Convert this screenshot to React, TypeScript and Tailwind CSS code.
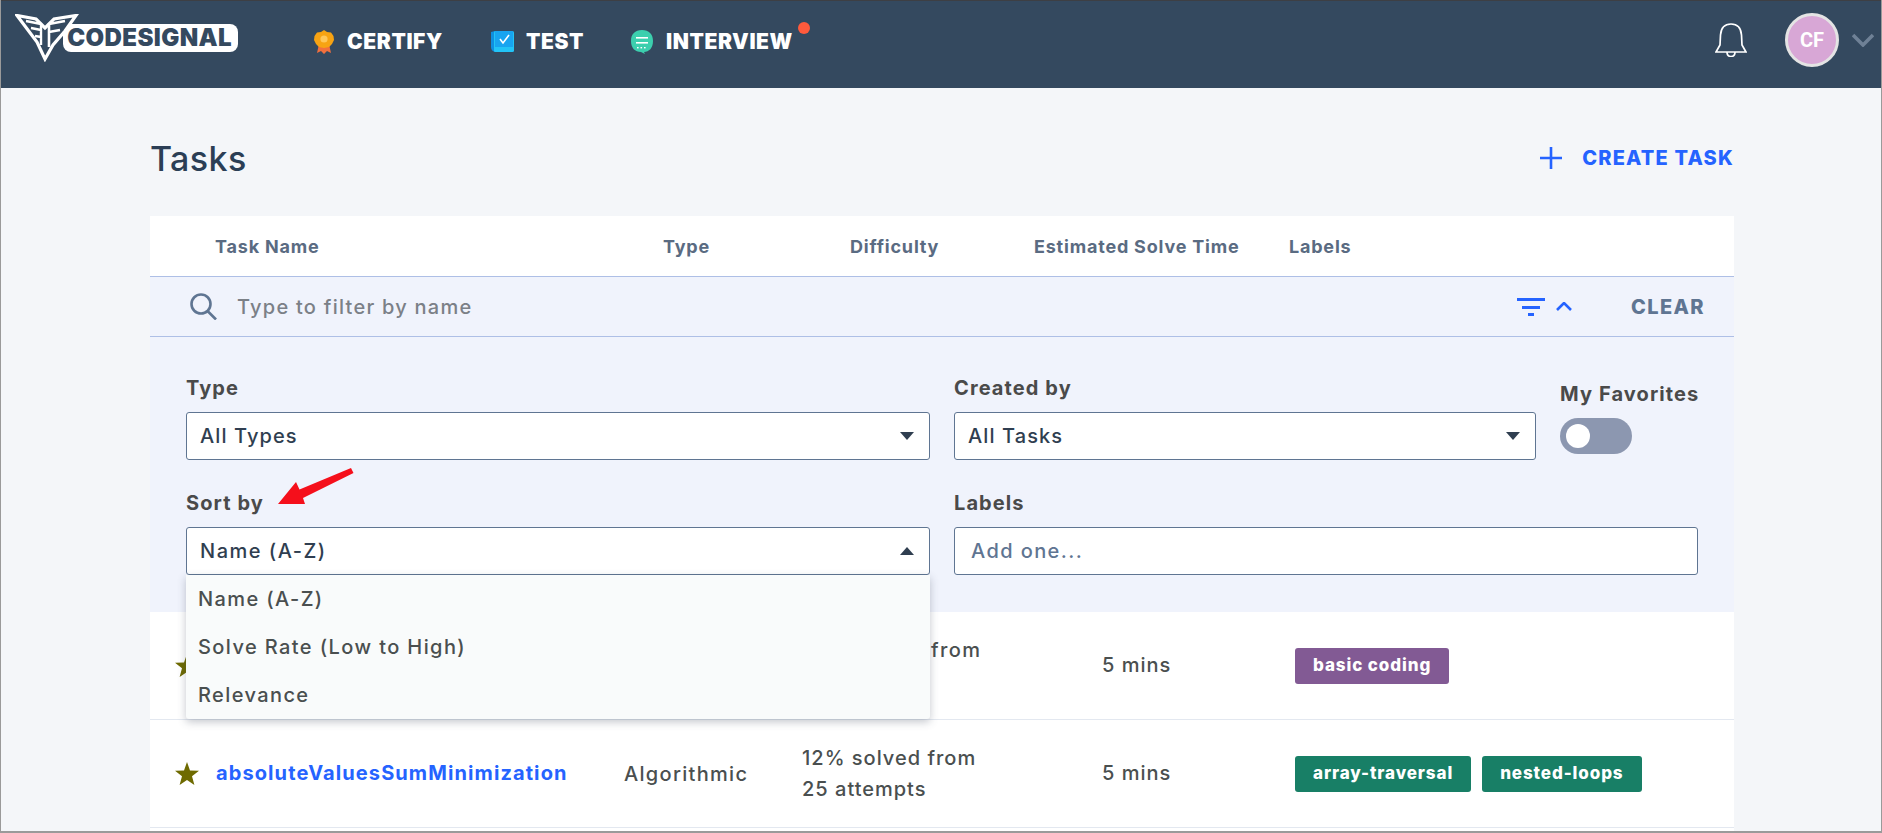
import React from "react";

const font = { fontFamily: '"Inter", "Liberation Sans", sans-serif' };

function Logo() {
  return (
    <div className="relative flex h-[48px] w-[224px] items-center">
      <div className="absolute left-[48px] top-[10px] flex h-[28px] w-[175px] items-center justify-end rounded-[8px] bg-white pr-[6px]">
        <span className="text-[24px] font-black leading-none tracking-[0.4px] text-[#34495f]">CODESIGNAL</span>
      </div>
      <svg viewBox="0 0 64 48" className="absolute left-0 top-0 h-[48px] w-[64px]">
        <path d="M2 1.5 L21 5 L30 14 L39 5 L61 1.5 L50 17 L38 31 L30 45 L22 28 Z" fill="#34495f" stroke="#fff" strokeWidth="3.2" strokeLinejoin="miter" />
        <path d="M11 7 L26 10 V31 M16 14 L26 16 M20 22 L26 23" fill="none" stroke="#fff" strokeWidth="2.4" />
        <path d="M50 7 L34 10 V33 M34 18 L45 16" fill="none" stroke="#fff" strokeWidth="2.6" />
      </svg>
    </div>
  );
}

function Medal() {
  return (
    <svg viewBox="0 0 20 24" className="h-[24px] w-[20px]">
      <path d="M5 14 L3 23 L7 21 L10 24 L13 21 L17 23 L15 14 Z" fill="#f2703d" />
      <path d="M10 0 L13 2 L17 2.5 L19.5 6 L20 10 L18 14 L15 17 L10 18 L5 17 L2 14 L0 10 L0.5 6 L3 2.5 L7 2 Z" fill="#f7a313" />
      <circle cx="10" cy="9" r="3.6" fill="#ffc75a" />
    </svg>
  );
}

function TestIcon() {
  return (
    <svg viewBox="0 0 23 21" className="h-[21px] w-[23px]">
      <path d="M0 1 L4 0 L4 17 L8 21 L4 21 Q0 20 0 16 Z" fill="#0f8fe0" />
      <rect x="3" y="0" width="20" height="21" rx="1.5" fill="#22c4f7" />
      <rect x="4" y="0" width="18" height="16" fill="#18a4f0" />
      <path d="M9 8 L12 12 L18 4" fill="none" stroke="#fff" strokeWidth="1.6" />
    </svg>
  );
}

function ChatIcon() {
  return (
    <svg viewBox="0 0 22 24" className="h-[24px] w-[22px]">
      <path d="M11 0 C18 0 22 4 22 11 C22 18 18 22 13 22 L14 24 L10 22 C4 22 0 18 0 11 C0 4 4 0 11 0 Z" fill="#3ccfae" />
      <rect x="5" y="7" width="12" height="1.6" fill="#fff" />
      <rect x="5" y="12" width="12" height="1.6" fill="#fff" />
      <rect x="6" y="17" width="1.6" height="1.4" fill="#fff" />
      <rect x="9.5" y="17" width="1.6" height="1.4" fill="#fff" />
      <rect x="13" y="17" width="1.6" height="1.4" fill="#fff" />
    </svg>
  );
}

function Caret({ up }: { up?: boolean }) {
  return (
    <svg viewBox="0 0 14 8" className="h-[8px] w-[14px]">
      <path d={up ? "M7 0 L14 8 L0 8 Z" : "M0 0 L14 0 L7 8 Z"} fill="#2f3e50" />
    </svg>
  );
}

function FieldLabel({ children }: { children: React.ReactNode }) {
  return <div className="mb-[12px] h-[24px] whitespace-nowrap text-[20px] font-bold leading-[24px] tracking-[1.1px] text-[#4a4a4a]">{children}</div>;
}

function Select({ value, up }: { value: string; up?: boolean }) {
  return (
    <div className={`flex h-[48px] items-center justify-between rounded-[3px] border border-[#5f7592] bg-white pl-[13px] pr-[15px] text-[20px] font-medium text-[#2f3e50] ${up ? "tracking-[1.5px]" : "tracking-[1.1px]"}`}>
      <span>{value}</span>
      <Caret up={up} />
    </div>
  );
}

function Tag({ children, color }: { children: React.ReactNode; color: string }) {
  return (
    <span className={`flex h-[36px] items-center rounded-[3px] px-[18px] text-[17px] font-extrabold tracking-[0.9px] text-white ${color}`}>
      {children}
    </span>
  );
}

function Star() {
  return (
    <svg viewBox="0 0 24 23" className="h-[23px] w-[24px]">
      <path d="M12 0 L15 8.4 L24 8.8 L17 14.3 L19.4 23 L12 18 L4.6 23 L7 14.3 L0 8.8 L9 8.4 Z" fill="#6e6a00" />
    </svg>
  );
}

const rowGrid = "grid grid-cols-[41px_409px_177px_300px_193px_1fr] items-center";

export default function App() {
  return (
    <div style={font} className="h-[833px] overflow-hidden border-x border-b-2 border-[#9a9a9a] bg-[#f4f6f9]">
      <header className="flex h-[88px] items-start border-t border-[#3d3f44] bg-[#34495f] pl-[14px] pr-[7px]">
        <div className="mt-[13px]"><Logo /></div>
        <nav className="ml-[75px] mt-[25px] flex items-center text-[21px] font-black tracking-[0.6px] text-white">
          <div className="flex w-[177px] items-center gap-[13px]"><Medal />CERTIFY</div>
          <div className="flex w-[140px] items-center gap-[12px]"><TestIcon />TEST</div>
          <div className="relative flex items-center gap-[13px]">
            <ChatIcon />INTERVIEW
            <span className="absolute right-[-17px] top-[-4px] h-[12px] w-[12px] rounded-full bg-[#ff5a3c]" />
          </div>
        </nav>
        <div className="ml-auto mt-[12px] flex items-center">
          <svg viewBox="0 0 32 34" className="mr-[38px] h-[34px] w-[32px]" fill="none" stroke="#fff" strokeWidth="1.7">
            <path d="M1 29 L5 22 L5.5 12 C6 5 10 1 16 1 C22 1 26 5 26.5 12 L27 22 L31 29 Z" />
            <path d="M12 29 C12 35 20 35 20 29" />
          </svg>
          <div className="mr-[13px] flex h-[54px] w-[54px] items-center justify-center rounded-full border-[3px] border-[#e4e4e4] bg-[#d8a7d6] text-[20px] font-bold text-white" style={{ fontFamily: "Roboto, sans-serif" }}>CF</div>
          <svg viewBox="0 0 22 14" className="h-[14px] w-[22px]" fill="none" stroke="#6f8196" strokeWidth="3.6">
            <path d="M1 2 L11 12 L21 2" />
          </svg>
        </div>
      </header>

      <main className="pl-[149px] pr-[147px]">
        <div className="flex h-[128px] items-center justify-between pt-[14px]">
          <h1 className="text-[34px] font-medium leading-none tracking-[0.4px] text-[#2b3e55]">Tasks</h1>
          <div className="mt-[-2px] flex items-center gap-[20px] text-[20px] font-extrabold tracking-[1.2px] text-[#2563ff]">
            <svg viewBox="0 0 22 22" className="h-[22px] w-[22px]" stroke="#2563ff" strokeWidth="2.6"><path d="M11 0 V22 M0 11 H22" /></svg>
            CREATE TASK
          </div>
        </div>

        <section className="relative min-h-[615px] bg-white">
          <div className="grid h-[60px] grid-cols-[448px_187px_184px_255px_1fr] items-center pl-[65px] text-[18px] font-bold tracking-[0.8px] text-[#5a6b82]">
            <span>Task Name</span>
            <span>Type</span>
            <span>Difficulty</span>
            <span>Estimated Solve Time</span>
            <span>Labels</span>
          </div>

          <div className="flex h-[61px] items-center border-y border-[#aebfe6] bg-[#f0f3fc] pl-[40px] pr-[29px]">
            <svg viewBox="0 0 27 27" className="h-[27px] w-[27px]" fill="none" stroke="#5f7592" strokeWidth="2.6">
              <circle cx="11" cy="11" r="9.5" />
              <path d="M17.5 18 L26 26.5" />
            </svg>
            <span className="ml-[20px] text-[20px] font-medium tracking-[1.25px] text-[#7b8087]">Type to filter by name</span>
            <div className="ml-auto flex items-center">
              <svg viewBox="0 0 28 18" className="h-[18px] w-[28px]" fill="#2563ff">
                <rect x="0" y="0" width="28" height="3" />
                <rect x="5" y="8" width="18" height="3" />
                <rect x="11" y="15" width="6" height="3" />
              </svg>
              <svg viewBox="0 0 16 9" className="ml-[11px] h-[9px] w-[16px]" fill="none" stroke="#2563ff" strokeWidth="2.6">
                <path d="M1 8 L8 1 L15 8" />
              </svg>
              <span className="ml-[59px] text-[20px] font-extrabold tracking-[1.4px] text-[#5f7592]">CLEAR</span>
            </div>
          </div>

          <div className="h-[275px] bg-[#f0f3fc] pl-[36px] pr-[36px] pt-[39px]">
            <div className="grid grid-cols-[744px_582px_1fr] gap-x-[24px]">
              <div>
                <FieldLabel>Type</FieldLabel>
                <Select value="All Types" />
              </div>
              <div>
                <FieldLabel>Created by</FieldLabel>
                <Select value="All Tasks" />
              </div>
              <div className="pt-[6px]">
                <FieldLabel>My Favorites</FieldLabel>
                <div className="flex h-[36px] w-[72px] items-center rounded-full bg-[#8c97b0] pl-[6px]">
                  <span className="h-[24px] w-[24px] rounded-full bg-white" />
                </div>
              </div>
            </div>
            <div className="mt-[31px] grid grid-cols-[744px_1fr] gap-x-[24px]">
              <div className="relative">
                <FieldLabel>Sort by</FieldLabel>
                <Select value="Name (A-Z)" up />
                <svg viewBox="0 0 76 38" className="absolute left-[92px] top-[-24px] h-[38px] w-[76px]">
                  <path d="M0 37 L18 15 L21.5 22.5 L73 1 L75.5 6 L25 31 L27 37 Z" fill="#f50f1b" />
                </svg>
                <div className="absolute left-0 right-0 top-[84px] z-10 flex h-[144px] flex-col rounded-b-[3px] bg-[#f9fbfb] pl-[12px] text-[20px] font-medium tracking-[1.4px] text-[#4a4f4f] shadow-[0_3px_8px_rgba(60,70,90,0.3)]">
                  <div className="flex h-[48px] items-center">Name (A-Z)</div>
                  <div className="flex h-[48px] items-center">Solve Rate (Low to High)</div>
                  <div className="flex h-[48px] items-center">Relevance</div>
                </div>
              </div>
              <div>
                <FieldLabel>Labels</FieldLabel>
                <div className="flex h-[48px] items-center rounded-[3px] border border-[#5f7592] bg-white pl-[16px] text-[20px] font-medium tracking-[1.4px] text-[#5f7592]">Add one...</div>
              </div>
            </div>
          </div>

          <div className={`${rowGrid} h-[108px] border-b border-[#e3e8f0] pl-[25px] text-[20px] font-medium tracking-[1px] text-[#4a4f4f]`}>
            <Star />
            <span />
            <span />
            <span className="self-start pl-[129px] pt-[23px] leading-[31px] tracking-[1.4px]">from</span>
            <span className="mt-[-1px]">5 mins</span>
            <div className="flex gap-[11px]"><Tag color="bg-[#825a94]">basic coding</Tag></div>
          </div>
          <div className={`${rowGrid} h-[108px] border-b border-[#e3e8f0] pl-[25px] text-[20px] font-medium tracking-[1px] text-[#4a4f4f]`}>
            <Star />
            <a className="mt-[-1px] text-[20px] font-bold tracking-[1.1px] text-[#2563ff]">absoluteValuesSumMinimization</a>
            <span className="ml-[-1px] tracking-[1.3px]">Algorithmic</span>
            <span className="leading-[31px]">12% solved from<br />25 attempts</span>
            <span className="mt-[-1px]">5 mins</span>
            <div className="flex gap-[11px]">
              <Tag color="bg-[#187f66]">array-traversal</Tag>
              <Tag color="bg-[#187f66]">nested-loops</Tag>
            </div>
          </div>
        </section>
      </main>
    </div>
  );
}
